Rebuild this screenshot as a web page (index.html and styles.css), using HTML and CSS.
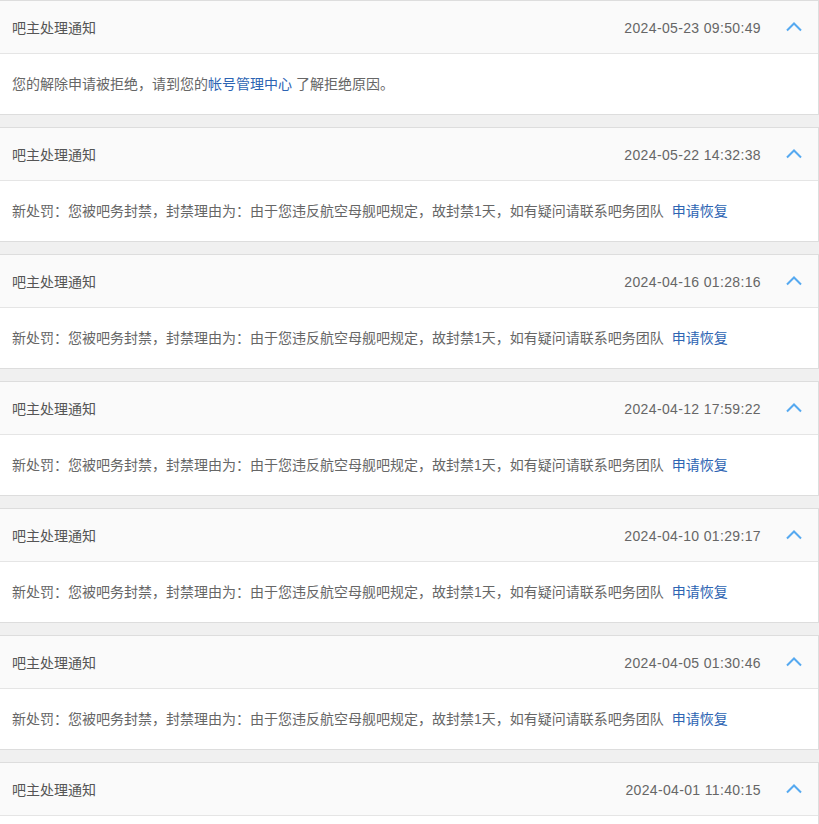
FILE: index.html
```html
<!DOCTYPE html>
<html lang="zh-CN">
<head>
    <meta charset="UTF-8">
    <meta name="viewport" content="width=device-width, initial-scale=1.0">
    <title>吧主处理通知</title>
    <link rel="stylesheet" href="styles.css">
</head>
<body>
    <div class="notice-list">
        <div class="notice">
            <div class="notice-head">
                <span class="notice-title">吧主处理通知</span>
                <span class="notice-time">2024-05-23 09:50:49</span>
                <svg class="arrow" width="16" height="10" viewBox="0 0 16 10"><polyline points="1,8.5 8,1.5 15,8.5" /></svg>
            </div>
            <div class="notice-body">您的解除申请被拒绝，请到您的<a href="#">帐号管理中心</a> 了解拒绝原因。</div>
        </div>
        <div class="notice">
            <div class="notice-head">
                <span class="notice-title">吧主处理通知</span>
                <span class="notice-time">2024-05-22 14:32:38</span>
                <svg class="arrow" width="16" height="10" viewBox="0 0 16 10"><polyline points="1,8.5 8,1.5 15,8.5" /></svg>
            </div>
            <div class="notice-body">新处罚：您被吧务封禁，封禁理由为：由于您违反航空母舰吧规定，故封禁1天，如有疑问请联系吧务团队 <a class="appeal" href="#">申请恢复</a></div>
        </div>
        <div class="notice">
            <div class="notice-head">
                <span class="notice-title">吧主处理通知</span>
                <span class="notice-time">2024-04-16 01:28:16</span>
                <svg class="arrow" width="16" height="10" viewBox="0 0 16 10"><polyline points="1,8.5 8,1.5 15,8.5" /></svg>
            </div>
            <div class="notice-body">新处罚：您被吧务封禁，封禁理由为：由于您违反航空母舰吧规定，故封禁1天，如有疑问请联系吧务团队 <a class="appeal" href="#">申请恢复</a></div>
        </div>
        <div class="notice">
            <div class="notice-head">
                <span class="notice-title">吧主处理通知</span>
                <span class="notice-time">2024-04-12 17:59:22</span>
                <svg class="arrow" width="16" height="10" viewBox="0 0 16 10"><polyline points="1,8.5 8,1.5 15,8.5" /></svg>
            </div>
            <div class="notice-body">新处罚：您被吧务封禁，封禁理由为：由于您违反航空母舰吧规定，故封禁1天，如有疑问请联系吧务团队 <a class="appeal" href="#">申请恢复</a></div>
        </div>
        <div class="notice">
            <div class="notice-head">
                <span class="notice-title">吧主处理通知</span>
                <span class="notice-time">2024-04-10 01:29:17</span>
                <svg class="arrow" width="16" height="10" viewBox="0 0 16 10"><polyline points="1,8.5 8,1.5 15,8.5" /></svg>
            </div>
            <div class="notice-body">新处罚：您被吧务封禁，封禁理由为：由于您违反航空母舰吧规定，故封禁1天，如有疑问请联系吧务团队 <a class="appeal" href="#">申请恢复</a></div>
        </div>
        <div class="notice">
            <div class="notice-head">
                <span class="notice-title">吧主处理通知</span>
                <span class="notice-time">2024-04-05 01:30:46</span>
                <svg class="arrow" width="16" height="10" viewBox="0 0 16 10"><polyline points="1,8.5 8,1.5 15,8.5" /></svg>
            </div>
            <div class="notice-body">新处罚：您被吧务封禁，封禁理由为：由于您违反航空母舰吧规定，故封禁1天，如有疑问请联系吧务团队 <a class="appeal" href="#">申请恢复</a></div>
        </div>
        <div class="notice">
            <div class="notice-head">
                <span class="notice-title">吧主处理通知</span>
                <span class="notice-time">2024-04-01 11:40:15</span>
                <svg class="arrow" width="16" height="10" viewBox="0 0 16 10"><polyline points="1,8.5 8,1.5 15,8.5" /></svg>
            </div>
            <div class="notice-body"></div>
        </div>
    </div>
</body>
</html>
```
FILE: styles.css
```css
body {
    margin: 0;
    font-family: "Liberation Sans", "Noto Sans CJK SC", sans-serif;
    font-size: 14px;
    color: #666;
    background-color: #f0f0f0;
}
.notice-list {
    display: flex;
    flex-direction: column;
    gap: 12px;
}
.notice {
    border: 1px solid #ddd;
    border-left: none;
    background-color: #fff;
}
.notice-head {
    display: flex;
    align-items: center;
    height: 52px;
    padding: 0 16px 0 12px;
    background-color: #fafafa;
    border-bottom: 1px solid #e5e5e5;
}
.notice-title {
    flex: 1;
    color: #555;
}
.notice-time {
    color: #666;
    margin-right: 25px;
    padding-top: 1px;
    letter-spacing: 0.35px;
}
.arrow polyline {
    fill: none;
    stroke: #55a9f0;
    stroke-width: 2;
}
.notice-body {
    height: 60px;
    line-height: 60px;
    padding-left: 12px;
}
.notice-body a {
    color: #2d64b3;
    text-decoration: none;
}
.notice-body .appeal {
    margin-left: 4px;
}
```
